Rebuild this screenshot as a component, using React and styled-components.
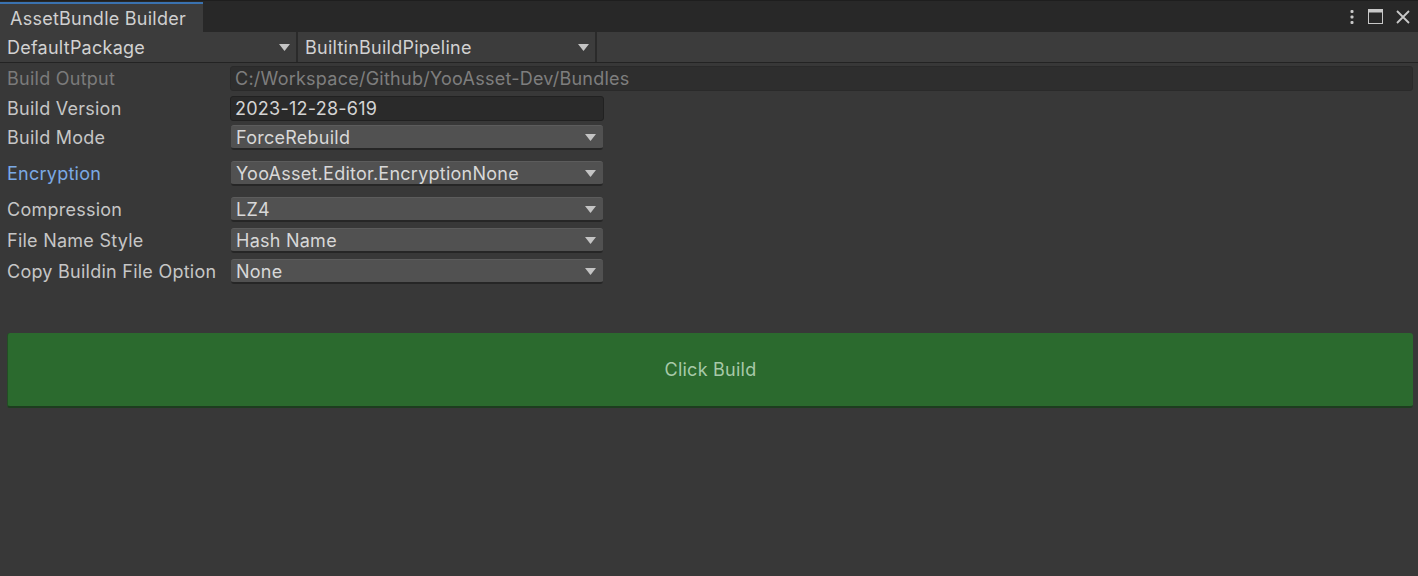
import React from "react";
import styled, { createGlobalStyle } from "styled-components";

const Global = createGlobalStyle`
  html, body { margin: 0; padding: 0; background: #383838; }
  body { font-family: Inter, "Noto Sans", sans-serif; width: 1418px; height: 576px; overflow: hidden; }
`;

const Window = styled.div`
  width: 1418px;
  height: 576px;
  background: #383838;
  display: flex;
  flex-direction: column;
  font-size: 18px;
  letter-spacing: 0.25px;
`;

const TabBar = styled.div`
  height: 32px;
  background: #282828;
  display: flex;
  align-items: flex-end;
  border-top: 1px solid #1e1e1e;
  box-sizing: border-box;
`;

const Tab = styled.div`
  width: 203px;
  height: 30px;
  background: #3c3c3c;
  border-top: 2px solid #3a72b0;
  box-sizing: border-box;
  color: #d0d0d0;
  padding-left: 10px;
  display: flex;
  align-items: center;
`;

const TabSpacer = styled.div`flex: 1;`;

const WinIcons = styled.div`
  display: flex;
  align-items: center;
  gap: 13px;
  height: 31px;
  padding-right: 8px;
`;

const Toolbar = styled.div`
  height: 31px;
  background: #3c3c3c;
  border-bottom: 1px solid #232323;
  display: flex;
  box-sizing: border-box;
`;

const ToolDrop = styled.div`
  width: ${(p) => p.$w}px;
  display: flex;
  align-items: center;
  justify-content: space-between;
  padding: 0 6px 0 7px;
  box-sizing: border-box;
  border-right: 2px solid #2a2a2a;
  color: #d2d2d2;
`;

const Body = styled.div`
  display: flex;
  flex-direction: column;
  padding: 0 5px 0 7px;
`;

const Row = styled.div`
  display: flex;
  align-items: center;
  height: 25px;
  margin-top: ${(p) => p.$mt}px;
`;

const Label = styled.div`
  width: 224px;
  flex: none;
  white-space: nowrap;
  color: ${(p) => (p.$tone === "dim" ? "#7b7b7b" : p.$tone === "blue" ? "#7ba9e4" : "#c6c6c6")};
`;

const TextField = styled.div`
  width: ${(p) => (p.$full ? "auto" : "374px")};
  flex: ${(p) => (p.$full ? 1 : "none")};
  height: 25px;
  box-sizing: border-box;
  border-radius: 3px;
  background: ${(p) => (p.$dim ? "#2e2e2e" : "#2a2a2a")};
  border: 1px solid ${(p) => (p.$dim ? "#2a2a2a" : "#212121")};
  color: ${(p) => (p.$dim ? "#7e7e7e" : "#d4d4d4")};
  padding-left: 4px;
  display: flex;
  align-items: center;
  margin-left: -1px;
`;

const Dropdown = styled.div`
  width: 372px;
  height: 25px;
  box-sizing: border-box;
  border-radius: 3px;
  background: #515151;
  border-bottom: 2px solid #262626;
  border-top: 1px solid #5c5c5c;
  color: #d8d8d8;
  padding: 0 7px 0 5px;
  display: flex;
  align-items: center;
  justify-content: space-between;
`;

const BuildButton = styled.button`
  margin: 49px 0 0 0;
  height: 75px;
  width: 1406px;
  background: #2b6a2e;
  border: none;
  border-radius: 3px;
  border-bottom: 2px solid #1d3d1f;
  border-left: 1px solid #234d25;
  color: #a7c9a8;
  font-family: Inter, "Noto Sans", sans-serif;
  font-size: 18px;
  letter-spacing: 0.25px;
  cursor: pointer;
`;

const Arrow = () => (
  <svg width="11" height="7" viewBox="0 0 11 7">
    <path d="M0 0 H11 L5.5 7 Z" fill="#c4c4c4" />
  </svg>
);

const Kebab = () => (
  <svg width="6" height="16" viewBox="0 0 6 16">
    <rect x="1.5" y="1" width="3" height="3" rx="1" fill="#c8c8c8" />
    <rect x="1.5" y="6.5" width="3" height="3" rx="1" fill="#c8c8c8" />
    <rect x="1.5" y="12" width="3" height="3" rx="1" fill="#c8c8c8" />
  </svg>
);

const Maximize = () => (
  <svg width="15" height="15" viewBox="0 0 15 15">
    <rect x="0.5" y="0.5" width="14" height="14" fill="none" stroke="#c8c8c8" />
    <rect x="0.5" y="0.5" width="14" height="3" fill="#c8c8c8" />
  </svg>
);

const Close = () => (
  <svg width="14" height="14" viewBox="0 0 14 14">
    <path d="M1 1 L13 13 M13 1 L1 13" stroke="#c8c8c8" strokeWidth="1.8" />
  </svg>
);

const rows = [
  { label: "Build Output", type: "text", value: "C:/Workspace/Github/YooAsset-Dev/Bundles", tone: "dim", mt: 3, full: true },
  { label: "Build Version", type: "text", value: "2023-12-28-619", mt: 5 },
  { label: "Build Mode", type: "drop", value: "ForceRebuild", mt: 4 },
  { label: "Encryption", type: "drop", value: "YooAsset.Editor.EncryptionNone", tone: "blue", mt: 11 },
  { label: "Compression", type: "drop", value: "LZ4", mt: 11 },
  { label: "File Name Style", type: "drop", value: "Hash Name", mt: 6 },
  { label: "Copy Buildin File Option", type: "drop", value: "None", mt: 6 },
];

export default function App() {
  return (
    <Window>
      <Global />
      <TabBar>
        <Tab>AssetBundle Builder</Tab>
        <TabSpacer />
        <WinIcons>
          <Kebab />
          <Maximize />
          <Close />
        </WinIcons>
      </TabBar>
      <Toolbar>
        <ToolDrop $w={298}>
          <span>DefaultPackage</span>
          <Arrow />
        </ToolDrop>
        <ToolDrop $w={299}>
          <span>BuiltinBuildPipeline</span>
          <Arrow />
        </ToolDrop>
      </Toolbar>
      <Body>
        {rows.map((r) => (
          <Row key={r.label} $mt={r.mt}>
            <Label $tone={r.tone}>{r.label}</Label>
            {r.type === "text" ? (
              <TextField $full={r.full} $dim={r.tone === "dim"}>{r.value}</TextField>
            ) : (
              <Dropdown>
                <span>{r.value}</span>
                <Arrow />
              </Dropdown>
            )}
          </Row>
        ))}
        <BuildButton>Click Build</BuildButton>
      </Body>
    </Window>
  );
}
